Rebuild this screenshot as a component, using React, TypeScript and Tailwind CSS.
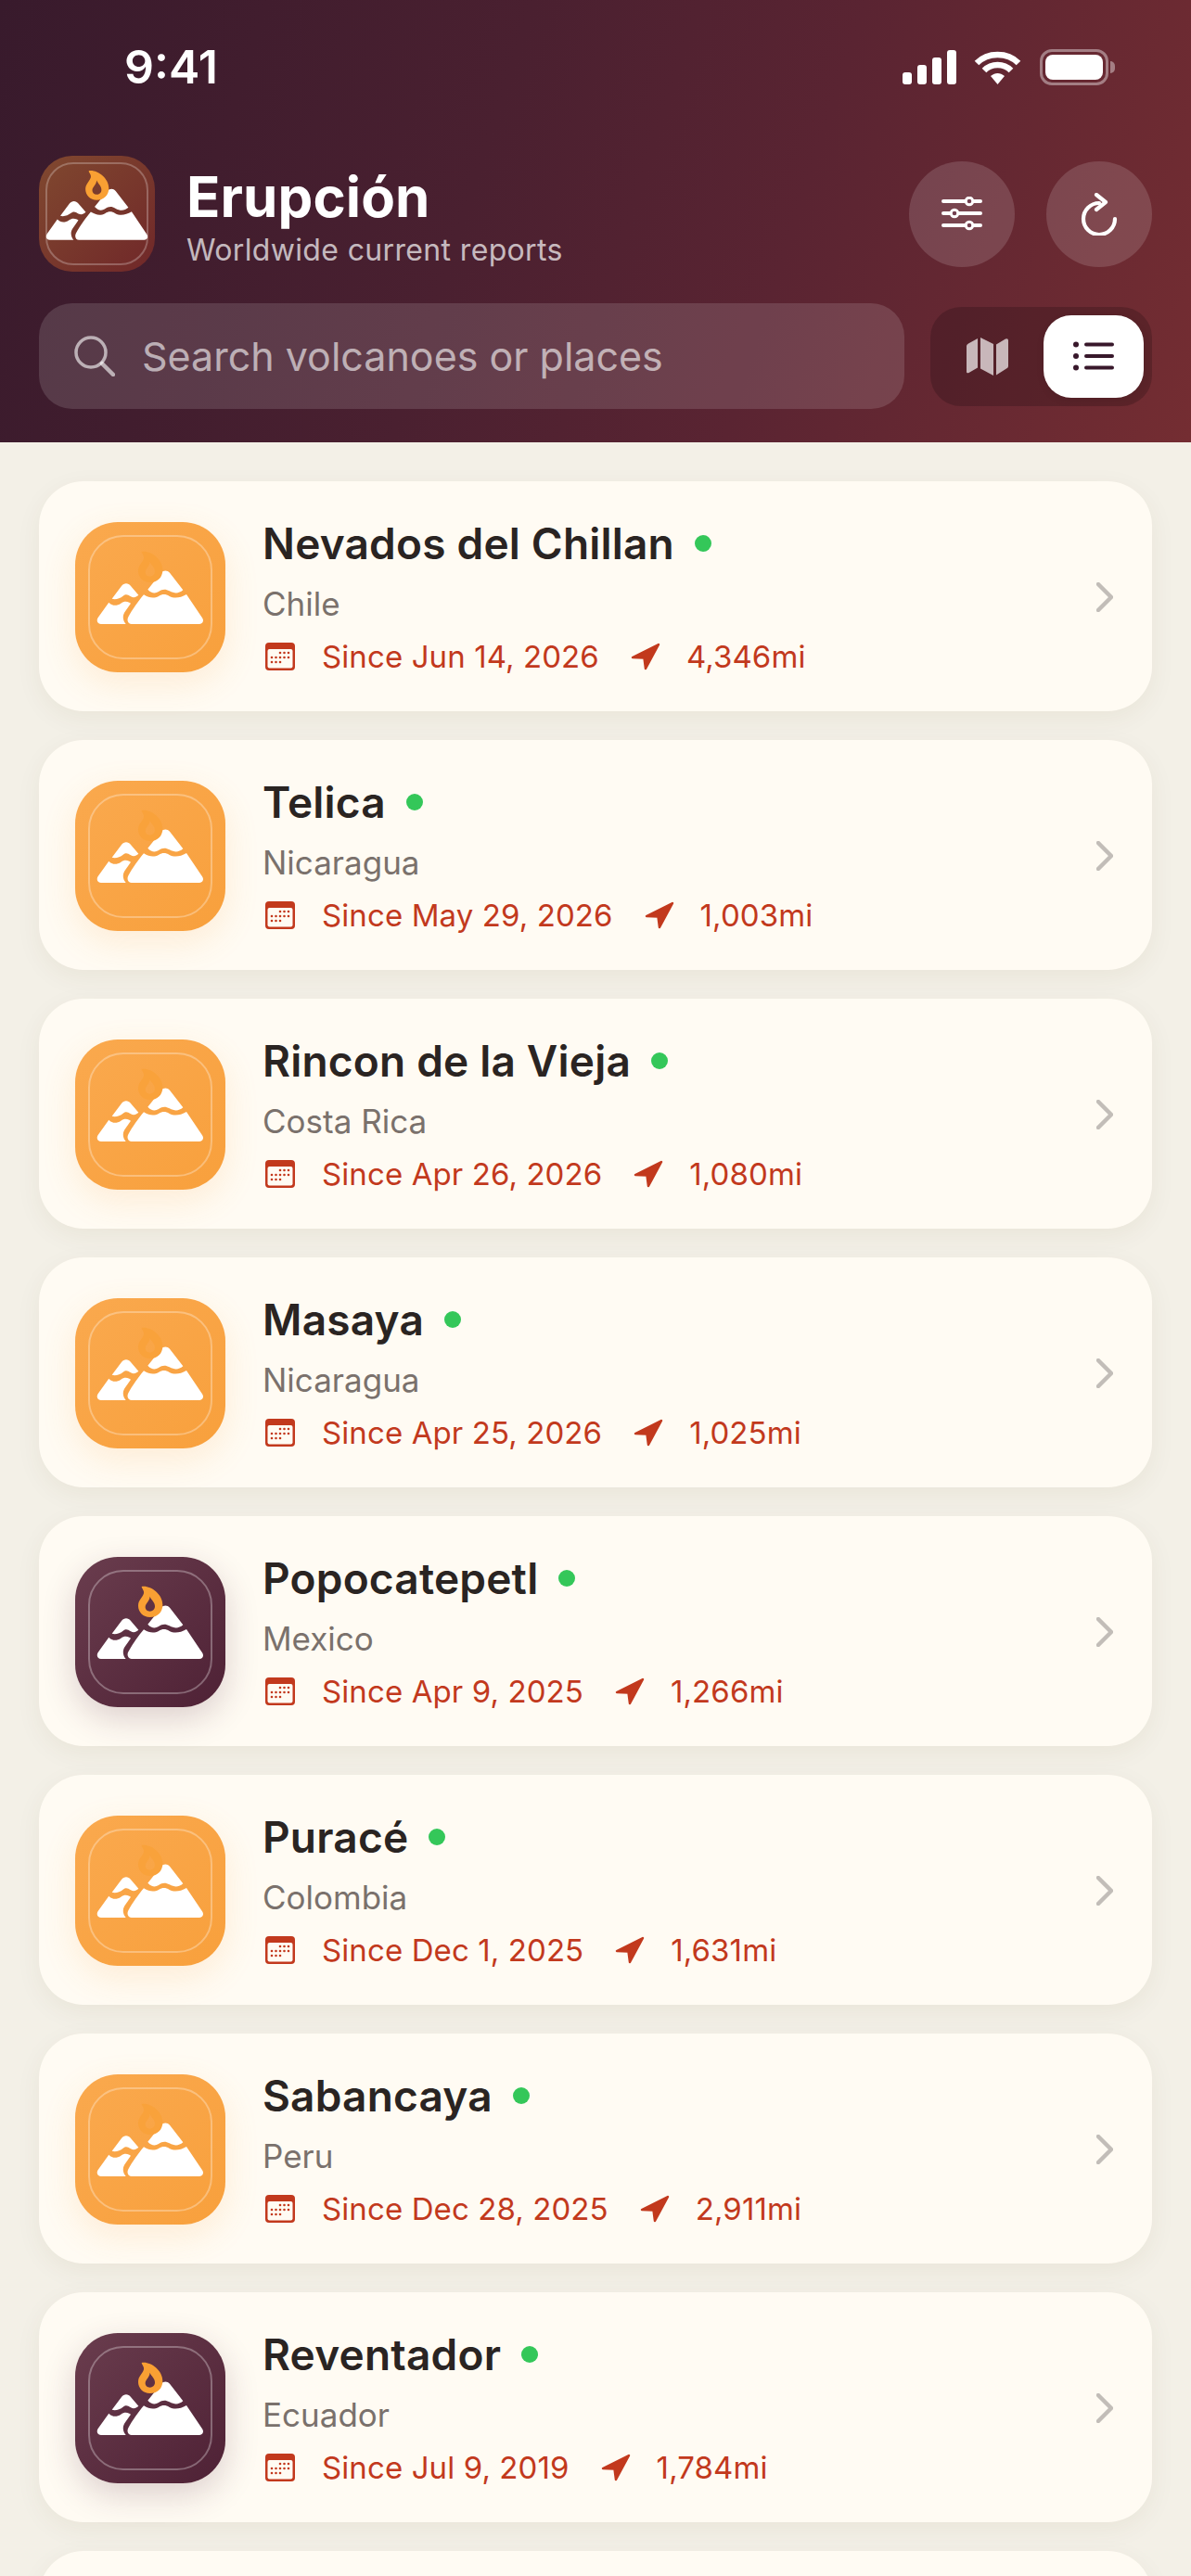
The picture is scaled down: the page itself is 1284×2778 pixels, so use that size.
import React from "react";

type Item = { name: string; place: string; since: string; dist: string; dark?: boolean };

const items: Item[] = [
  { name: "Nevados del Chillan", place: "Chile", since: "Since Jun 14, 2026", dist: "4,346mi" },
  { name: "Telica", place: "Nicaragua", since: "Since May 29, 2026", dist: "1,003mi" },
  { name: "Rincon de la Vieja", place: "Costa Rica", since: "Since Apr 26, 2026", dist: "1,080mi" },
  { name: "Masaya", place: "Nicaragua", since: "Since Apr 25, 2026", dist: "1,025mi" },
  { name: "Popocatepetl", place: "Mexico", since: "Since Apr 9, 2025", dist: "1,266mi", dark: true },
  { name: "Puracé", place: "Colombia", since: "Since Dec 1, 2025", dist: "1,631mi" },
  { name: "Sabancaya", place: "Peru", since: "Since Dec 28, 2025", dist: "2,911mi" },
  { name: "Reventador", place: "Ecuador", since: "Since Jul 9, 2019", dist: "1,784mi", dark: true },
];

function Mountains({ flame }: { flame: string }) {
  return (
    <>
      <path
        fill="#fff"
        d="M119 248 L150 207 C158 196 172 196 180 207 L205 236 C197 243 190 246 180 241 C170 235 165 232 155 239 C145 247 130 252 119 248 Z"
      />
      <path
        fill="#fff"
        d="M109 260 C120 272 135 272 148 263 C158 256 165 256 175 260 L180 263 L160 292 C152 305 155 320 164 330 L84 330 C72 330 68 318 74 309 Z"
      />
      <path
        fill="#fff"
        d="M235 218 L278 164 C286 155 298 155 306 164 L349 220 C335 232 322 232 305 223 C293 216 282 216 270 225 C258 233 246 230 235 218 Z"
      />
      <path
        fill="#fff"
        d="M222 235 C240 246 255 248 270 240 C283 232 292 232 305 240 C320 248 340 246 360 234 L411 310 C418 320 412 330 402 330 L182 330 C172 330 166 318 172 307 C185 283 205 255 222 235 Z"
      />
      <path
        fill={flame}
        fillRule="evenodd"
        d="M215 96 C240 90 283 118 283 155 C283 180 265 195 242 195 C220 195 204 178 204 158 C204 140 218 132 222 118 C224 108 216 104 215 96 Z M242 128 C246 140 258 145 258 160 C258 170 250 176 242 176 C233 176 227 170 227 162 C227 150 240 145 242 128 Z"
      />
    </>
  );
}

function VolcanoIcon({ dark }: { dark?: boolean }) {
  return (
    <div
      className={
        dark
          ? "relative mt-[1px] w-[162px] h-[162px] shrink-0 rounded-[46px] bg-gradient-to-br from-[#6a3d4e] to-[#4e2135] shadow-[0_12px_36px_rgba(78,33,53,0.2)]"
          : "relative mt-[1px] w-[162px] h-[162px] shrink-0 rounded-[46px] bg-gradient-to-br from-[#faa94e] to-[#f8a03c] shadow-[0_12px_36px_rgba(248,160,60,0.16)]"
      }
    >
      <div className="absolute inset-[14px] rounded-[38px] border-[2.5px] border-white/30" />
      <svg viewBox="0 0 486 486" className="absolute inset-0 w-full h-full">
        <Mountains flame={dark ? "#f9a033" : "#f9a23b"} />
      </svg>
    </div>
  );
}

function Logo() {
  return (
    <div className="relative w-[125px] h-[125px] shrink-0 rounded-[36px] bg-gradient-to-br from-[#80482f] to-[#702729]">
      <div className="absolute inset-[7px] rounded-[30px] border-2 border-white/25" />
      <svg viewBox="0 0 486 486" className="absolute inset-0 w-full h-full">
        <g transform="translate(-58,-56) scale(1.24)">
          <Mountains flame="#f9a033" />
        </g>
      </svg>
    </div>
  );
}

function Calendar() {
  return (
    <svg width="32" height="30" viewBox="0 0 32 30" className="shrink-0 ml-[3px]">
      <rect width="32" height="30" rx="4" fill="#c2391d" />
      <rect x="2.5" y="7" width="27" height="20.5" rx="2" fill="#fffbf3" />
      <g fill="#c2391d">
        {[11, 16, 21].map((y, r) =>
          [7, 11.5, 16, 20.5, 25].map((x, c) =>
            (r === 0 && c < 2) || (r === 2 && c > 2) ? null : (
              <circle key={`${x}-${y}`} cx={x} cy={y} r="1.3" />
            ),
          ),
        )}
      </g>
    </svg>
  );
}

function Arrow() {
  return (
    <svg width="32" height="30" viewBox="0 0 32 30" className="shrink-0">
      <path
        d="M30 2 L2 16 L14.5 16.5 L16 28 Z"
        fill="#c2391d"
        stroke="#c2391d"
        strokeWidth="2.5"
        strokeLinejoin="round"
      />
    </svg>
  );
}

function Card({ item }: { item: Item }) {
  return (
    <div className="flex items-center h-[248px] rounded-[48px] bg-[#fffbf3] pl-[39px] pr-[42px] shadow-[0_8px_28px_rgba(90,60,20,0.06)]">
      <VolcanoIcon dark={item.dark} />
      <div className="ml-[40px] pt-[4px] pb-[2px] flex flex-col min-w-0">
        <div className="flex items-center h-[56px]">
          <span className="text-[46px] leading-[56px] font-semibold text-[#2a2422] tracking-[0.2px]">{item.name}</span>
          <span className="ml-[22px] w-[18px] h-[18px] rounded-full bg-[#34c759]" />
        </div>
        <div className="mt-[15px] text-[35px] leading-[44px] text-[#7a716c]">{item.place}</div>
        <div className="mt-[13px] flex items-center h-[44px] text-[33px] leading-[44px] text-[#c2391d] tracking-[0.1px]">
          <Calendar />
          <span className="ml-[29px]">{item.since}</span>
          <span className="ml-[34px]"><Arrow /></span>
          <span className="ml-[28px]">{item.dist}</span>
        </div>
      </div>
      <svg width="18" height="32" viewBox="0 0 18 32" className="ml-auto mt-[2px] shrink-0">
        <path d="M2 2 L16 16 L2 30" fill="none" stroke="#c2bdb8" strokeWidth="4.5" strokeLinecap="round" strokeLinejoin="round" />
      </svg>
    </div>
  );
}

function StatusIcons() {
  return (
    <div className="flex items-center">
      <svg width="58" height="37" viewBox="0 0 58 37">
        <g fill="#fff">
          <rect x="0" y="24" width="10" height="13" rx="3" />
          <rect x="16" y="16" width="10" height="21" rx="3" />
          <rect x="32" y="8" width="10" height="29" rx="3" />
          <rect x="48" y="0" width="10" height="37" rx="3" />
        </g>
      </svg>
      <svg width="51" height="37" viewBox="0 0 51 37" className="ml-[19px]">
        <g fill="none" stroke="#fff" strokeWidth="6.5">
          <path d="M3 14 C15 2 36 2 48 14" />
          <path d="M11 22 C19 14 32 14 40 22" />
        </g>
        <path d="M18 28 C23 24 28 24 33 28 L25.5 37 Z" fill="#fff" />
      </svg>
      <div className="ml-[20px] w-[74px] h-[39px] rounded-[13px] border-[3px] border-white/40 p-[3px]">
        <div className="w-full h-full rounded-[8px] bg-white" />
      </div>
      <div className="ml-[2px] w-[5px] h-[13px] rounded-r-full bg-white/40" />
    </div>
  );
}

export default function App() {
  return (
    <div className="w-[1284px] h-[2778px] overflow-hidden bg-[#f3f0e7] font-[Inter,sans-serif]">
      <header className="h-[477px] bg-[linear-gradient(108deg,#381a2c_0%,#4a2030_40%,#5a2432_65%,#742d32_100%)] px-[42px] pt-[52px]">
        <div className="flex items-center justify-between h-[40px] pl-[92px] pr-[40px]">
          <span className="text-[50px] leading-[40px] font-semibold text-white">9:41</span>
          <StatusIcons />
        </div>
        <div className="mt-[76px] flex items-center h-[125px]">
          <Logo />
          <div className="ml-[34px] pt-[5px] flex flex-col">
            <span className="text-[60px] leading-[70px] font-bold text-white tracking-[0.1px]">Erupción</span>
            <span className="mt-[4px] text-[32px] leading-[38px] text-white/70 tracking-[0.35px]">Worldwide current reports</span>
          </div>
          <div className="ml-auto flex gap-[34px]">
            <button className="w-[114px] h-[114px] rounded-full bg-white/[0.14] flex items-center justify-center">
              <svg width="44" height="38" viewBox="0 0 44 38">
                <g stroke="#fff" strokeWidth="4" strokeLinecap="round">
                  <path d="M2 5 H42 M2 18 H42 M2 31 H42" />
                </g>
                <g fill="#744050" stroke="#fff" strokeWidth="3">
                  <circle cx="30" cy="5" r="3.8" />
                  <circle cx="14" cy="18" r="3.8" />
                  <circle cx="30" cy="31" r="3.8" />
                </g>
              </svg>
            </button>
            <button className="w-[114px] h-[114px] rounded-full bg-white/[0.14] flex items-center justify-center">
              <svg width="40" height="46" viewBox="0 0 40 46" fill="none" stroke="#fff" strokeWidth="4.2" strokeLinecap="round" strokeLinejoin="round">
                <path d="M20 11 A17 17 0 1 0 37 28" />
                <path d="M17 2 L27 10 L17 18" />
              </svg>
            </button>
          </div>
        </div>
        <div className="mt-[34px] flex items-center gap-[28px]">
          <div className="flex-1 h-[114px] rounded-[36px] bg-white/[0.13] flex items-center pl-[38px]">
            <svg width="44" height="44" viewBox="0 0 44 44" fill="none" stroke="#fff" strokeOpacity="0.6" strokeWidth="3.5" strokeLinecap="round">
              <circle cx="18" cy="18" r="16" />
              <path d="M30 30 L42 42" strokeWidth="4.5" />
            </svg>
            <span className="ml-[29px] text-[43px] text-white/60">Search volcanoes or places</span>
          </div>
          <div className="flex h-[107px] p-[9px] gap-[5px] rounded-[33px] bg-black/[0.18]">
            <button className="w-[108px] h-[89px] pr-[4px] flex items-center justify-center">
              <svg width="45" height="41" viewBox="0 0 45 41" fill="#fff" fillOpacity="0.68">
                <path d="M0 9 Q0 7.5 2 6.5 L12 1 V32.5 L2.5 38 Q0 39 0 37 Z" />
                <path d="M15 0 L29 7 V41 L15 33.5 Z" />
                <path d="M32 7.5 L42 1.5 Q45 0.5 45 3 V31 Q45 32.5 43 33.5 L32 40.5 Z" />
              </svg>
            </button>
            <button className="w-[108px] h-[89px] rounded-[30px] bg-white flex items-center justify-center shadow-[0_3px_8px_rgba(0,0,0,0.08)]">
              <svg width="44" height="32" viewBox="0 0 44 32" fill="#38182b">
                <circle cx="3" cy="3.5" r="3" />
                <circle cx="3" cy="16" r="3" />
                <circle cx="3" cy="28.5" r="3" />
                <rect x="12" y="1.5" width="32" height="4" rx="2" />
                <rect x="12" y="14" width="32" height="4" rx="2" />
                <rect x="12" y="26.5" width="32" height="4" rx="2" />
              </svg>
            </button>
          </div>
        </div>
      </header>
      <main className="px-[42px] pt-[42px] flex flex-col gap-[31px]">
        {items.map((item) => (
          <Card key={item.name} item={item} />
        ))}
        <div className="h-[248px] rounded-[48px] bg-[#fffbf3] shadow-[0_8px_28px_rgba(90,60,20,0.06)]" />
      </main>
    </div>
  );
}
